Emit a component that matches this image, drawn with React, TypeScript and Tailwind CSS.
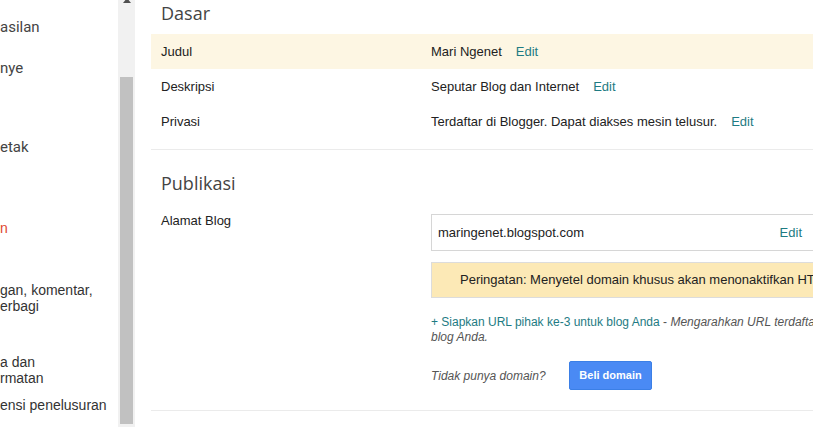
import React from "react";

const arial = { fontFamily: '"Liberation Sans", Arial, sans-serif' };

function Row({ label, value, hl }: { label: string; value: string; hl?: boolean }) {
  return (
    <div className={`flex h-[35px] items-center pl-[10px] ${hl ? "bg-[#fdf6e3]" : ""}`}>
      <div className="w-[270px] shrink-0 text-[13px] text-[#222]">{label}</div>
      <div className="flex items-center text-[13px] text-[#222] whitespace-nowrap">
        <span>{value}</span>
        <span className="ml-[14px] text-[#1e7b83]">Edit</span>
      </div>
    </div>
  );
}

export default function App() {
  return (
    <div className="flex h-[427px] w-[813px] overflow-hidden bg-white" style={arial}>
      {/* sidebar */}
      <div className="w-[118px] shrink-0 overflow-hidden pt-[17px] text-[#444]">
        <div className="h-[20px] text-[15px] leading-[20px] font-['Roboto']">asilan</div>
        <div className="mt-[21px] h-[20px] text-[15px] leading-[20px] font-['Roboto']">nye</div>
        <div className="mt-[59px] h-[20px] text-[15px] leading-[20px] font-['Roboto']">etak</div>
        <div className="mt-[63px] h-[16px] text-[14px] leading-[16px] text-[#e0472f]">n</div>
        <div className="mt-[46px] text-[14px] leading-[16px] text-[#333] whitespace-nowrap">
          gan, komentar,
          <br />
          erbagi
        </div>
        <div className="mt-[40px] text-[14px] leading-[16px] text-[#333] whitespace-nowrap">
          a dan
          <br />
          rmatan
        </div>
        <div className="mt-[11px] text-[14px] leading-[16px] text-[#333] whitespace-nowrap">ensi penelusuran</div>
      </div>

      {/* scrollbar */}
      <div className="relative flex w-[17px] shrink-0 flex-col bg-[#f1f1f1]">
        <div className="flex h-[77px] justify-center">
          <div className="mt-[-2px] h-0 w-0 border-x-[4px] border-b-[5px] border-x-transparent border-b-[#505050]" />
        </div>
        <div className="mx-[2px] h-[347px] bg-[#c1c1c1]" />
      </div>

      {/* main */}
      <div className="w-[700px] shrink-0 pl-[16px]">
        <div className="h-[34px] pl-[10px] text-[18px] leading-[26px] text-[#444] font-['Open_Sans']">Dasar</div>
        <Row label="Judul" value="Mari Ngenet" hl />
        <Row label="Deskripsi" value="Seputar Blog dan Internet" />
        <Row label="Privasi" value="Terdaftar di Blogger. Dapat diakses mesin telusur." />
        <div className="mt-[10px] h-px bg-[#ebebeb]" />

        <div className="mt-[20px] h-[26px] pl-[10px] text-[18px] leading-[26px] text-[#444] font-['Open_Sans']">
          Publikasi
        </div>
        <div className="mt-[10px] flex pl-[10px]">
          <div className="w-[270px] shrink-0 pt-[7px] text-[13px] leading-[16px] text-[#222]">Alamat Blog</div>
          <div className="w-[401px] shrink-0">
            <div className="mt-[8px] flex h-[37px] items-center justify-between border border-[#d6d6d6] pl-[6px] pr-[29px] text-[13px] text-[#222]">
              <span>maringenet.blogspot.com</span>
              <span className="text-[#1e7b83]">Edit</span>
            </div>
            <div className="mt-[11px] flex h-[36px] items-center border border-[#dcdcdc] bg-[#fce9b6] pl-[28px] text-[13px] text-[#222] whitespace-nowrap">
              Peringatan: Menyetel domain khusus akan menonaktifkan HTTPS untuk blog Anda.
            </div>
            <div className="mt-[17px] text-[12px] leading-[15px] whitespace-nowrap">
              <span className="text-[#1e7b83]">+ Siapkan URL pihak ke-3 untuk blog Anda</span>
              <span className="text-[#555]"> - </span>
              <span className="italic text-[#555]">Mengarahkan URL terdaftar Anda ke</span>
              <br />
              <span className="italic text-[#555]">blog Anda.</span>
            </div>
            <div className="mt-[16px] flex items-center">
              <span className="w-[138px] text-[12px] italic text-[#555]">Tidak punya domain?</span>
              <div className="flex h-[29px] w-[83px] items-center justify-center rounded-[2px] border border-[#3b7fe6] bg-[#4a8af4] text-[11px] font-bold text-white">
                Beli domain
              </div>
            </div>
          </div>
        </div>
        <div className="mt-[20px] h-px bg-[#ebebeb]" />
      </div>
    </div>
  );
}
